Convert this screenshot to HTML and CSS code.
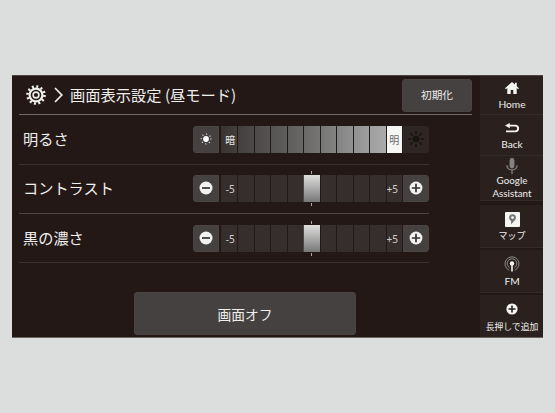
FILE: index.html
```
<!DOCTYPE html>
<html lang="ja">
<head>
    <meta charset="UTF-8">
    <meta name="viewport" content="width=device-width, initial-scale=1.0">
    <title>画面表示設定</title>
    <link rel="stylesheet" href="styles.css">
</head>
<body>
    <div class="screen">
        <main class="main">
            <header class="header">
                <svg class="gear" viewBox="0 0 20 20" width="20" height="20">
                    <circle cx="10" cy="10" r="8.5" fill="none" stroke="#f0f0ee" stroke-width="2.6" stroke-dasharray="2 2.451"/>
                    <circle cx="10" cy="10" r="6.4" fill="none" stroke="#f0f0ee" stroke-width="2.2"/>
                    <circle cx="10" cy="10" r="2.9" fill="none" stroke="#f0f0ee" stroke-width="1.6"/>
                </svg>
                <svg class="chevron" viewBox="0 0 9 16" width="9" height="16">
                    <path d="M1 1L7.8 8L1 15" fill="none" stroke="#eee" stroke-width="1.7"/>
                </svg>
                <h1>画面表示設定 (昼モード)</h1>
                <button class="reset">初期化</button>
            </header>

            <div class="row">
                <span class="label">明るさ</span>
                <div class="control">
                    <button class="step">
                        <svg viewBox="0 0 14 14" width="14" height="14">
                            <circle cx="7" cy="7" r="2.9" fill="#fff"/>
                            <circle cx="7" cy="7" r="4.9" fill="none" stroke="#ddd" stroke-width="1.3" stroke-linecap="round" stroke-dasharray="0.1 3.748"/>
                        </svg>
                    </button>
                    <div class="bar brightness">
                        <i><span>暗</span></i><i></i><i></i><i></i><i></i><i></i><i></i><i></i><i></i><i></i><i class="full"><span>明</span></i>
                    </div>
                    <button class="step disabled">
                        <svg viewBox="0 0 18 18" width="18" height="18">
                            <circle cx="9" cy="9" r="3.2" fill="#191312"/>
                            <path d="M9 1v3.2M9 13.8V17M1 9h3.2M13.8 9H17M3.4 3.4l2.2 2.2M12.4 12.4l2.2 2.2M3.4 14.6l2.2-2.2M12.4 5.6l2.2-2.2" stroke="#191312" stroke-width="1.6"/>
                        </svg>
                    </button>
                </div>
            </div>

            <div class="row">
                <span class="label">コントラスト</span>
                <div class="control">
                    <button class="step">
                        <svg viewBox="0 0 14 14" width="14" height="14">
                            <circle cx="7" cy="7" r="6.5" fill="#f2f2f1"/>
                            <path d="M3 7h8" stroke="#343130" stroke-width="1.7"/>
                        </svg>
                    </button>
                    <div class="bar">
                        <i><span>-5</span></i><i></i><i></i><i></i><i></i><i class="thumb"></i><i></i><i></i><i></i><i></i><i><span>+5</span></i>
                    </div>
                    <button class="step">
                        <svg viewBox="0 0 14 14" width="14" height="14">
                            <circle cx="7" cy="7" r="6.4" fill="#f2f2f1"/>
                            <path d="M2.8 7h8.4M7 2.8v8.4" stroke="#343130" stroke-width="1.7"/>
                        </svg>
                    </button>
                </div>
            </div>

            <div class="row">
                <span class="label">黒の濃さ</span>
                <div class="control">
                    <button class="step">
                        <svg viewBox="0 0 14 14" width="14" height="14">
                            <circle cx="7" cy="7" r="6.5" fill="#f2f2f1"/>
                            <path d="M3 7h8" stroke="#343130" stroke-width="1.7"/>
                        </svg>
                    </button>
                    <div class="bar">
                        <i><span>-5</span></i><i></i><i></i><i></i><i></i><i class="thumb"></i><i></i><i></i><i></i><i></i><i><span>+5</span></i>
                    </div>
                    <button class="step">
                        <svg viewBox="0 0 14 14" width="14" height="14">
                            <circle cx="7" cy="7" r="6.4" fill="#f2f2f1"/>
                            <path d="M2.8 7h8.4M7 2.8v8.4" stroke="#343130" stroke-width="1.7"/>
                        </svg>
                    </button>
                </div>
            </div>

            <button class="screen-off">画面オフ</button>
        </main>

        <nav class="sidebar">
            <a class="item home">
                <svg viewBox="0 0 14 12" width="14" height="12">
                    <path d="M7 0L0 6.2l.9 1L2.3 6v6h3.4V8h2.6v4h3.4V6l1.4 1.2.9-1-2.2-2V.8H10v1.8z" fill="#f4f4f3"/>
                </svg>
                <span>Home</span>
            </a>
            <a class="item back">
                <svg viewBox="0 0 14 10" width="14" height="10">
                    <path d="M4 2.6h6.2a2.9 2.9 0 0 1 0 5.8H1" fill="none" stroke="#f4f4f3" stroke-width="1.9"/>
                    <path d="M0 2.6L4.8 0v5.2z" fill="#f4f4f3"/>
                </svg>
                <span>Back</span>
            </a>
            <a class="item assistant">
                <svg viewBox="0 0 12 16" width="12" height="16">
                    <rect x="3.6" y="0" width="4.8" height="10.4" rx="2.4" fill="#858381"/>
                    <path d="M1 7.2c0 6.3 10 6.3 10 0M6 12v4" fill="none" stroke="#777573" stroke-width="1.5"/>
                </svg>
                <span>Google<br>Assistant</span>
            </a>
            <a class="item map">
                <svg viewBox="0 0 15 15" width="15" height="15">
                    <rect width="15" height="15" rx="1" fill="#f5f5f4"/>
                    <path d="M7.5 2.2a3.4 3.4 0 0 0-3.4 3.5c0 1.6 1.1 2.5 2 3.2v3.6l3-3.5c1-.8 1.8-1.8 1.8-3.3a3.4 3.4 0 0 0-3.4-3.5z" fill="#777"/>
                    <circle cx="7.6" cy="5.6" r="1.4" fill="#f5f5f4"/>
                </svg>
                <span>マップ</span>
            </a>
            <a class="item fm">
                <svg viewBox="0 0 16 16" width="16" height="16">
                    <g fill="none" stroke="#8b8987" stroke-width="1">
                        <path d="M5.2 14.2a7 7 0 1 1 5.6 0"/>
                        <path d="M5.6 11.7a4.8 4.8 0 1 1 4.8 0"/>
                    </g>
                    <circle cx="8" cy="7.4" r="2.2" fill="#f4f4f3"/>
                    <path d="M7.2 8h1.6v7.5H7.2z" fill="#f4f4f3"/>
                </svg>
                <span>FM</span>
            </a>
            <a class="item add">
                <svg viewBox="0 0 12 12" width="12" height="12">
                    <circle cx="6" cy="6" r="5.6" fill="#f5f5f4"/>
                    <path d="M2.5 6h7M6 2.5v7" stroke="#2a2321" stroke-width="1.6"/>
                </svg>
                <span>長押しで追加</span>
            </a>
        </nav>
    </div>
</body>
</html>
```
FILE: styles.css
```
* {
    box-sizing: border-box;
}

body {
    margin: 0;
    height: 413px;
    padding: 75px 12px;
    background-color: #dcdddd;
    font-family: "Noto Sans CJK JP", sans-serif;
    color: #eeeeed;
    overflow: hidden;
}

.screen {
    display: flex;
    width: 531px;
    height: 263px;
    background-color: #231815;
    border-top: 1px solid #4c4543;
    border-bottom: 1px solid #6b6664;
}

.main {
    width: 468px;
    padding: 0 8px 0 7px;
}

button {
    display: flex;
    align-items: center;
    justify-content: center;
    padding: 0;
    border: 1px solid #4a4442;
    border-radius: 3px;
    background-color: #454140;
    color: #eeeeed;
    font-family: inherit;
}

.header {
    display: flex;
    align-items: center;
    height: 39px;
    padding-left: 7px;
    border-bottom: 1px solid #6f6a68;
}

.chevron {
    margin: 0 7px 0 8px;
}

.header h1 {
    margin: 0;
    padding-bottom: 2px;
    font-size: 15.25px;
    font-weight: 400;
    line-height: 20px;
    white-space: nowrap;
}

.reset {
    width: 70px;
    height: 33px;
    margin-left: auto;
    padding-bottom: 2px;
    font-size: 10.7px;
}

.row {
    display: flex;
    align-items: center;
    justify-content: space-between;
    width: 410px;
    height: 49px;
    padding-left: 4px;
    border-bottom: 1px solid #3b3230;
}

.header + .row {
    height: 50px;
    padding-bottom: 1px;
}

.row:nth-child(3) {
    padding-bottom: 2px;
    border-bottom-color: #4a4341;
}

.label {
    padding-bottom: 2px;
    font-size: 15.2px;
    line-height: 20px;
}

.control {
    display: flex;
    gap: 1px;
    height: 27px;
}

.step {
    width: 26px;
    border-radius: 3px 0 0 3px;
}

.step:last-child {
    border-radius: 0 3px 3px 0;
}

.step.disabled {
    background-color: #2e2624;
    border-color: #302826;
}

.bar {
    display: grid;
    grid-template-columns: repeat(11, 1fr);
    width: 181px;
    margin-left: 1px;
    background-color: #352e2c;
}

.bar i {
    position: relative;
    display: flex;
    align-items: center;
    justify-content: center;
    border-left: 1px solid #211a18;
    font-style: normal;
    font-size: 10px;
}

.bar i:first-child {
    padding-left: 2px;
    border-left: none;
}

.bar span {
    padding-top: 2px;
    line-height: 14px;
}

.bar:not(.brightness) span {
    font-family: "Noto Sans", sans-serif;
    color: #d0cfce;
}

.bar:not(.brightness) i:last-child {
    justify-content: flex-end;
    padding-right: 4px;
}

.brightness {
    background: linear-gradient(to right, #393432, #484544 15%, #686766 45%, #949494 75%, #aaa 91%);
}

.bar .full {
    background-color: #f6f6f5;
    color: #666;
}

.bar .thumb {
    background: linear-gradient(#dededd, #777);
    border-left-color: #4b4644;
}

/* centre marks above and below the thumb */
.thumb::before,
.thumb::after {
    content: "";
    position: absolute;
    left: 7px;
    width: 1px;
    height: 3px;
    background-color: #aaa;
}

.thumb::before {
    top: -4px;
}

.thumb::after {
    bottom: -4px;
}

.screen-off {
    width: 222px;
    height: 43px;
    margin: 29px 0 0 115px;
    font-size: 13.8px;
}

.sidebar {
    display: flex;
    flex-direction: column;
    width: 63px;
}

.item {
    display: flex;
    flex-direction: column;
    align-items: center;
    padding-left: 1px;
    background-color: #2a211f;
    border-bottom: 1px solid #332b29;
    font-family: Lato, "Noto Sans CJK JP", sans-serif;
    font-size: 10.2px;
    line-height: 13px;
    text-align: center;
    white-space: nowrap;
}

.home {
    height: 39px;
    padding-top: 6px;
}

.home span {
    margin-top: 4px;
}

.back {
    height: 41px;
    padding-top: 8px;
}

.back span {
    margin-top: 5px;
}

.assistant {
    height: 45px;
    padding-top: 2px;
    font-size: 9.8px;
}

.map {
    height: 43px;
    margin-top: 4px;
    padding-top: 7px;
}

.map span {
    margin-top: 2px;
    font-size: 9px;
}

.fm {
    height: 43px;
    margin-top: 2px;
    padding-top: 6px;
}

.fm span {
    margin-top: 3px;
}

.add {
    flex: 1;
    margin-top: 2px;
    padding-top: 8px;
    border-bottom: none;
}

.add span {
    margin-top: 5px;
    font-size: 8.8px;
}
```
